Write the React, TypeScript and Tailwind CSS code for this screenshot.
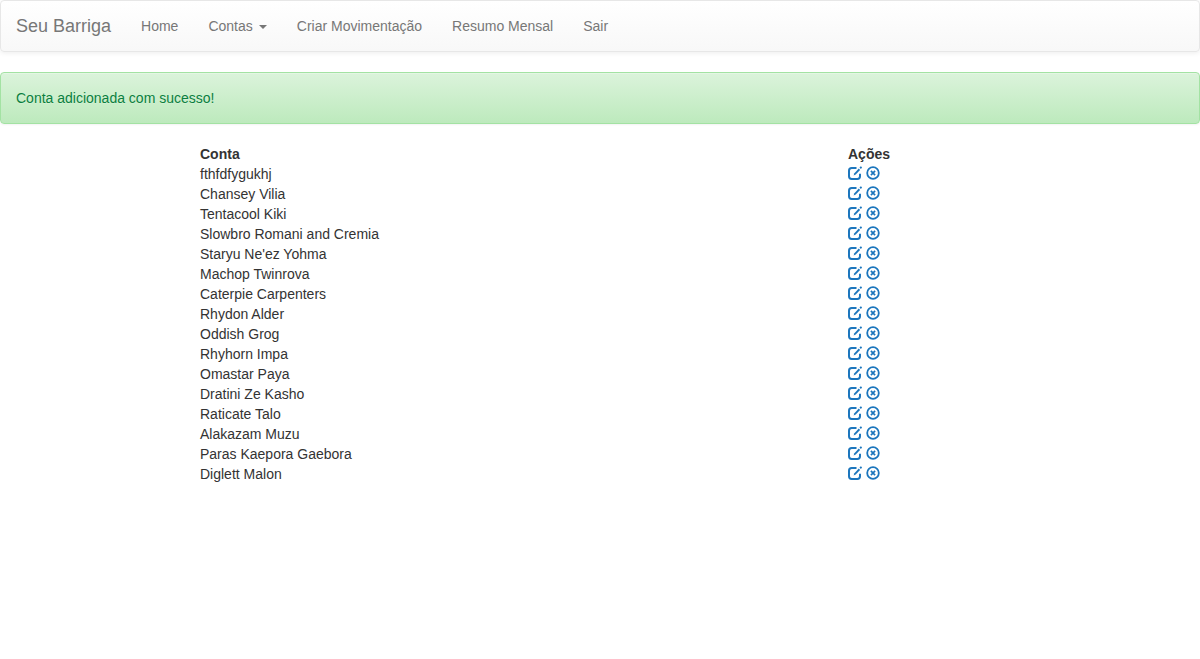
import React from "react";

const accounts: string[] = [
  "fthfdfygukhj",
  "Chansey Vilia",
  "Tentacool Kiki",
  "Slowbro Romani and Cremia",
  "Staryu Ne'ez Yohma",
  "Machop Twinrova",
  "Caterpie Carpenters",
  "Rhydon Alder",
  "Oddish Grog",
  "Rhyhorn Impa",
  "Omastar Paya",
  "Dratini Ze Kasho",
  "Raticate Talo",
  "Alakazam Muzu",
  "Paras Kaepora Gaebora",
  "Diglett Malon",
];

function EditIcon() {
  return (
    <svg viewBox="0 0 14 14" className="size-3.5" fill="none" aria-hidden="true">
      <path
        d="M8.500 2H3.700A2.700 2.700 0 0 0 1 4.700V10.200A2.700 2.700 0 0 0 3.700 12.900H9.300A2.700 2.700 0 0 0 12 10.200V7.800"
        stroke="currentColor"
        strokeWidth="2"
      />
      <path d="M10.800 2.600L12.100 3.900L7.700 8.600L5.600 9.400L6.400 7.200Z" fill="currentColor" />
      <path d="M11.500 1.600L12.600 .5Q12.900 .2 13.200 .5L13.900 1.200Q14.100 1.500 13.900 1.800L12.900 2.900Z" fill="currentColor" />
    </svg>
  );
}

function RemoveIcon() {
  return (
    <svg viewBox="0 0 14 14" className="size-3.5" fill="none" stroke="currentColor" aria-hidden="true">
      <circle cx="7" cy="7" r="5.800" strokeWidth="1.800" />
      <path d="M4.900 4.900L9.100 9.100M9.100 4.900L4.900 9.100" strokeWidth="1.700" />
    </svg>
  );
}

const navLink = "block p-[15px] hover:text-[#333]";

export default function App() {
  return (
    <div className="bg-white font-['Helvetica_Neue',Helvetica,'Liberation_Sans',Arial,sans-serif] text-sm/5 text-[#333]">
      <nav className="mb-5 flex flex-wrap items-center rounded border border-[#e7e7e7] bg-linear-to-b from-white to-[#f8f8f8] text-[#777] shadow-[inset_0_1px_0_rgba(255,255,255,0.15),0_1px_5px_rgba(0,0,0,0.075)] [text-shadow:0_1px_0_rgba(255,255,255,0.25)]">
        <a href="#" className="p-[15px] text-lg/5">
          Seu Barriga
        </a>
        <ul className="flex flex-wrap">
          <li>
            <a href="#home" className={navLink}>Home</a>
          </li>
          <li>
            <button type="button" aria-haspopup="menu" className="flex cursor-pointer items-center gap-1.5 p-[15px] hover:text-[#333]">
              Contas
              <span className="mt-0.5 border-x-4 border-t-4 border-x-transparent border-t-current" />
            </button>
          </li>
          <li>
            <a href="#movimentacao" className={navLink}>Criar Movimentação</a>
          </li>
          <li>
            <a href="#extrato" className={navLink}>Resumo Mensal</a>
          </li>
          <li>
            <a href="#sair" className={navLink}>Sair</a>
          </li>
        </ul>
      </nav>

      <div
        role="alert"
        className="mb-5 rounded border border-[#a3e2a3] bg-linear-to-b from-[#dbf3db] to-[#bdeabd] p-[15px] text-[#0b7f3f] shadow-[inset_0_1px_0_rgba(255,255,255,0.25),0_1px_2px_rgba(0,0,0,0.05)] [text-shadow:0_1px_0_rgba(255,255,255,0.2)]"
      >
        Conta adicionada com sucesso!
      </div>

      <table className="mx-auto w-2/3 table-fixed">
        <thead>
          <tr>
            <th className="w-[81%] text-left">Conta</th>
            <th className="text-left">Ações</th>
          </tr>
        </thead>
        <tbody>
          {accounts.map((account) => (
            <tr key={account}>
              <td>{account}</td>
              <td>
                <div className="flex h-5 items-start gap-1 pt-0.5 text-[#1c76bd]">
                  <a href="#editar" aria-label={`Editar ${account}`}>
                    <EditIcon />
                  </a>
                  <a href="#remover" aria-label={`Remover ${account}`}>
                    <RemoveIcon />
                  </a>
                </div>
              </td>
            </tr>
          ))}
        </tbody>
      </table>
    </div>
  );
}
